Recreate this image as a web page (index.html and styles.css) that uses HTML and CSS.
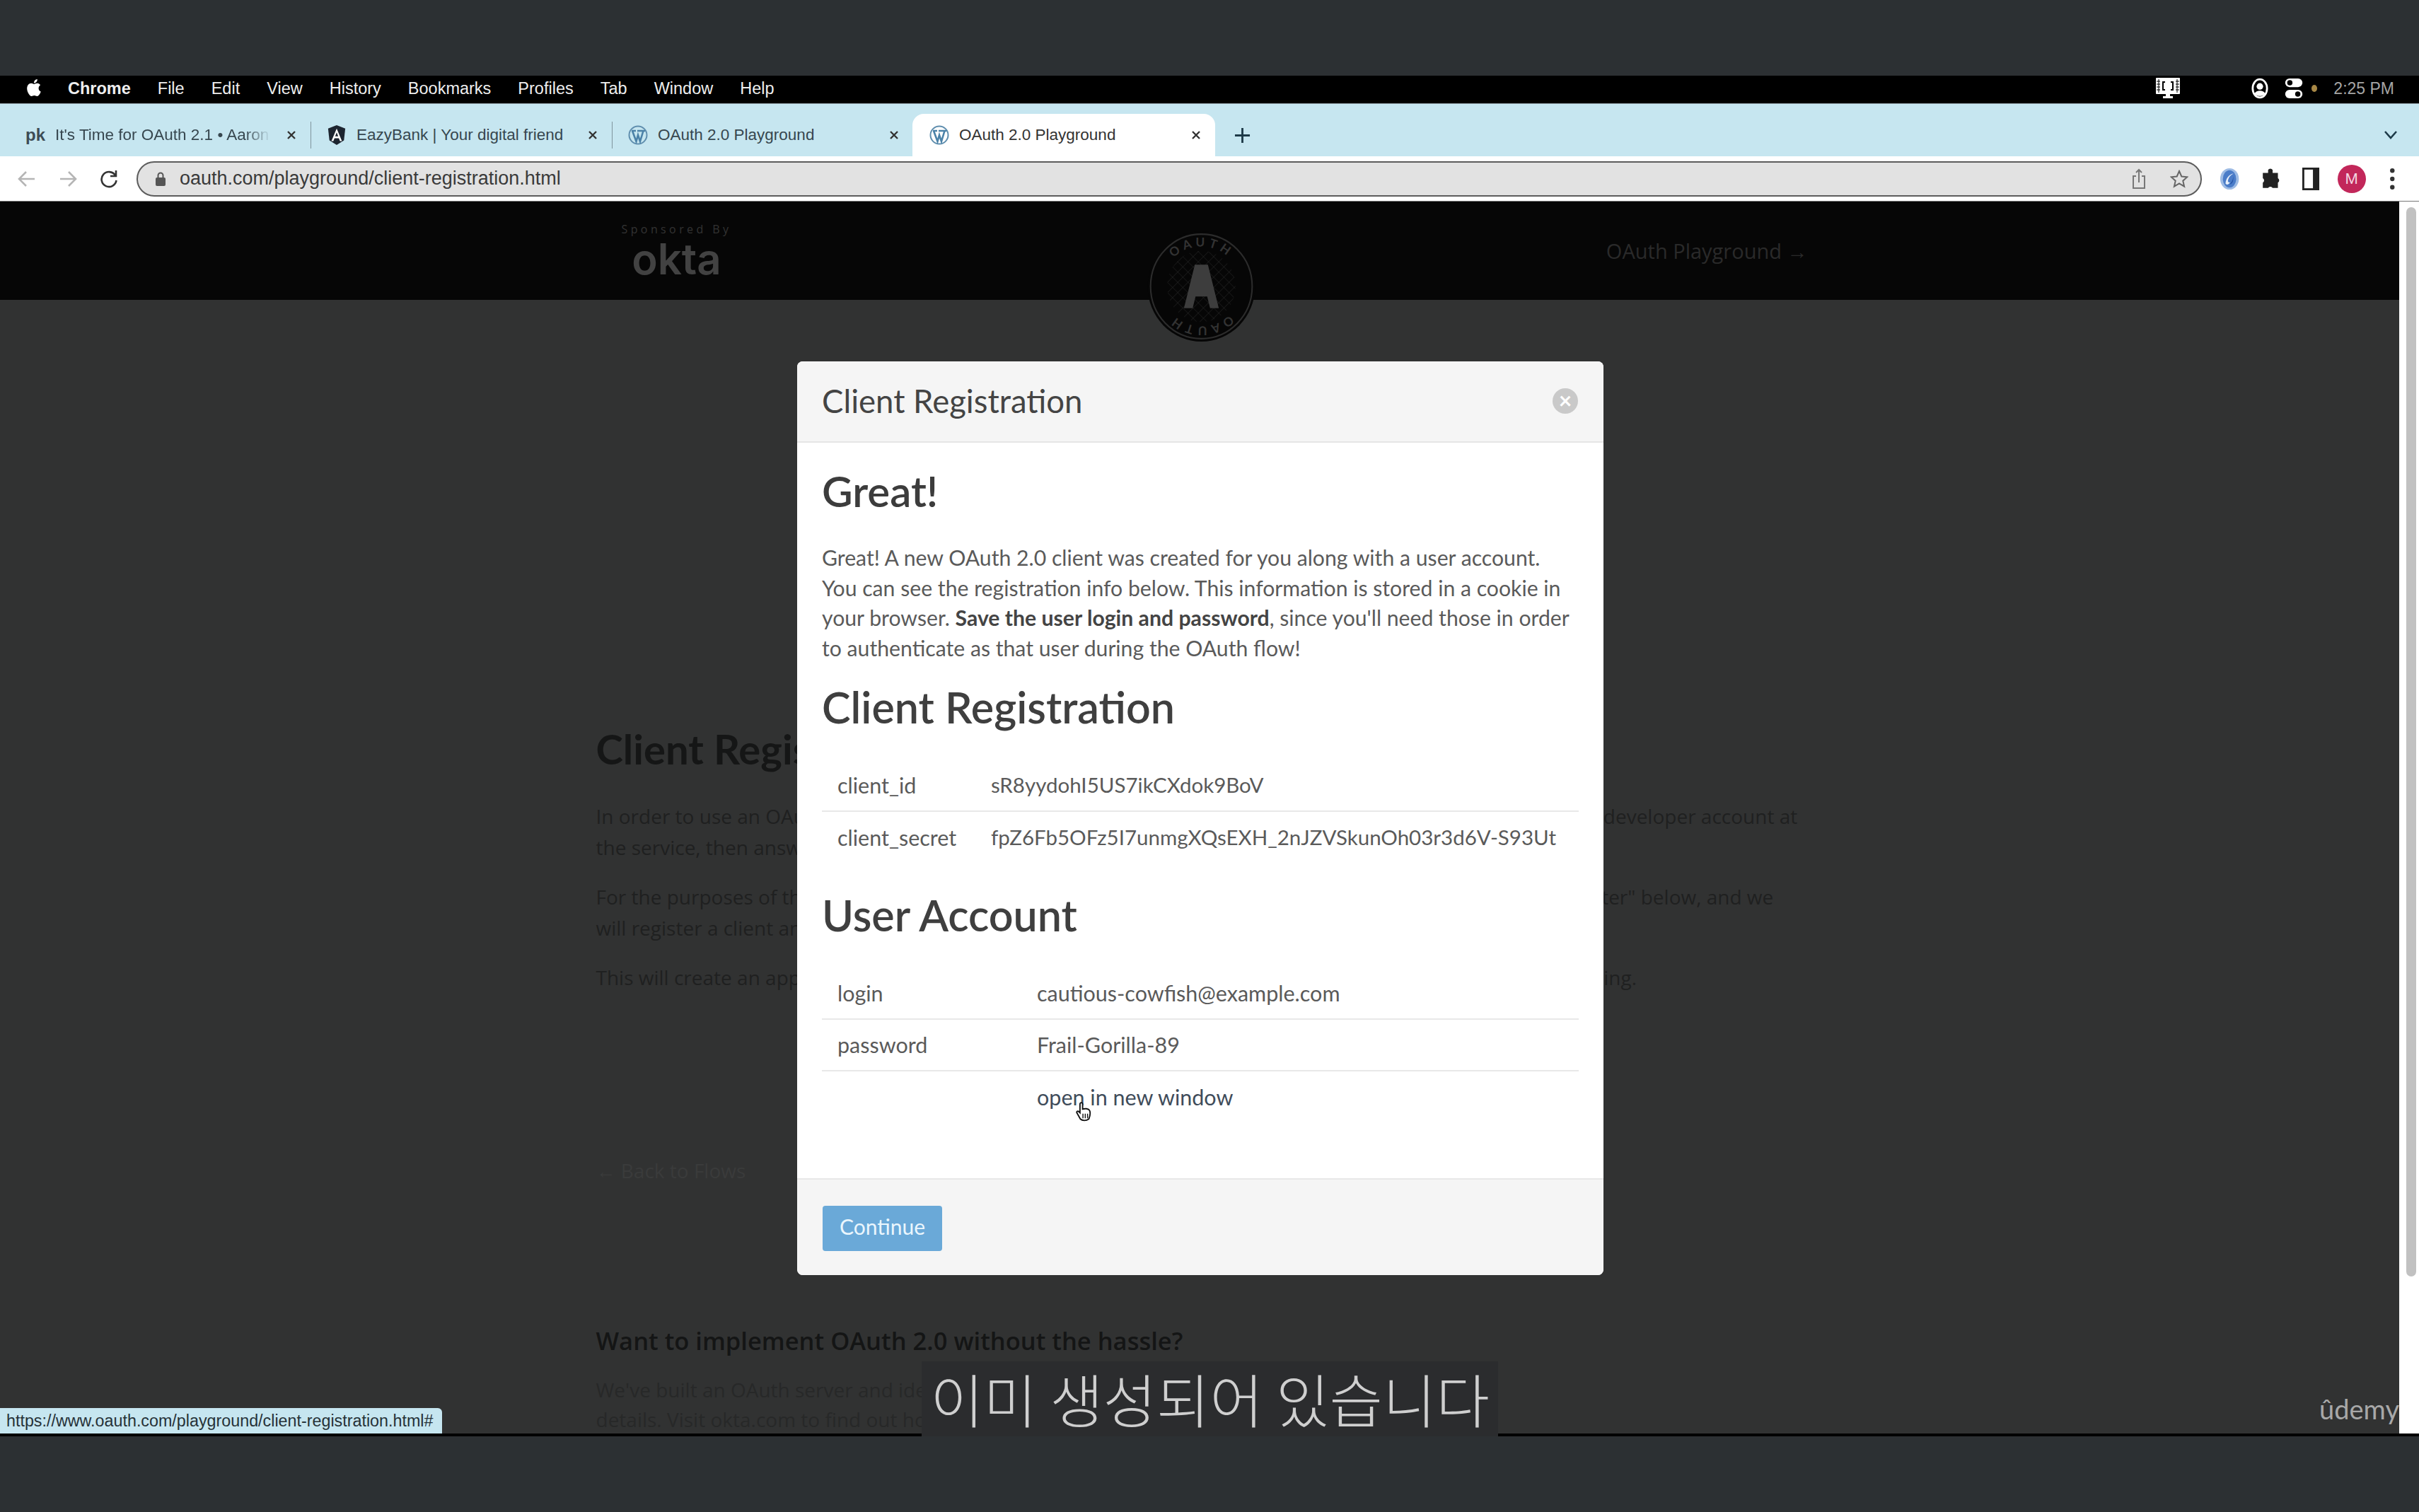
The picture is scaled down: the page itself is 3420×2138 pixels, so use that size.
FILE: index.html
```html
<!DOCTYPE html>
<html lang="en">
<head>
    <meta charset="UTF-8">
    <title>OAuth 2.0 Playground</title>
    <link rel="stylesheet" href="styles.css">
</head>
<body>
    <div class="letterbox letterbox-top"></div>

    <!-- Mac menu bar -->
    <div class="menubar">
        <svg class="apple" viewBox="0 0 24 24"><path fill="#fff" d="M12.152 6.896c-.948 0-2.415-1.078-3.96-1.04-2.04.027-3.91 1.183-4.961 3.014-2.117 3.675-.546 9.103 1.519 12.09 1.013 1.454 2.208 3.09 3.792 3.039 1.52-.065 2.09-.987 3.935-.987 1.831 0 2.35.987 3.96.948 1.637-.026 2.676-1.48 3.676-2.948 1.156-1.688 1.636-3.325 1.662-3.415-.039-.013-3.182-1.221-3.22-4.857-.026-3.04 2.48-4.494 2.597-4.559-1.429-2.09-3.623-2.324-4.39-2.376-2-.156-3.675 1.09-4.61 1.09zM15.53 3.83c.843-1.012 1.4-2.427 1.245-3.83-1.207.052-2.662.805-3.532 1.818-.78.896-1.454 2.338-1.273 3.714 1.338.104 2.715-.688 3.559-1.701"/></svg>
        <span class="menu-app">Chrome</span>
        <span>File</span>
        <span>Edit</span>
        <span>View</span>
        <span>History</span>
        <span>Bookmarks</span>
        <span>Profiles</span>
        <span>Tab</span>
        <span>Window</span>
        <span>Help</span>
        <div class="menu-status">
            <svg class="status-screen" viewBox="0 0 34 30">
                <rect width="34" height="23" rx="1" fill="#fff"/>
                <path d="M4 2v19M30 2v19M1 5h5M1 9h5M1 13h5M1 17h5M28 5h5M28 9h5M28 13h5M28 17h5" stroke="#000" stroke-width="1"/>
                <path d="M13 6h-3v11h3M21 6h3v11h-3" fill="none" stroke="#000" stroke-width="2"/>
                <path d="M14 23h6v3h4v3H10v-3h4z" fill="#fff"/>
            </svg>
            <svg class="status-user" viewBox="0 0 26 32">
                <ellipse cx="13" cy="16" rx="11" ry="14" fill="none" stroke="#fff" stroke-width="3"/>
                <circle cx="13" cy="13" r="5" fill="#fff"/>
                <path d="M5 24c2-6 14-6 16 0-4 5-12 5-16 0z" fill="#fff"/>
            </svg>
            <svg class="status-toggles" viewBox="0 0 26 32">
                <rect y="1" width="26" height="13" rx="6.5" fill="#fff"/>
                <circle cx="7" cy="7.5" r="4" fill="#000"/>
                <rect y="18" width="26" height="13" rx="6.5" fill="#fff"/>
                <circle cx="19" cy="24.5" r="4" fill="#000"/>
            </svg>
            <span class="status-dot"></span>
            <span class="status-time">2:25 PM</span>
        </div>
    </div>

    <!-- Chrome tabs -->
    <div class="tabstrip">
        <div class="tab">
            <span class="favicon-text">pk</span>
            <span class="tab-title tab-title-fade">It's Time for OAuth 2.1 • Aaron</span>
            <svg class="tab-close" viewBox="0 0 14 14"><path d="M2 2l10 10M12 2L2 12"/></svg>
        </div>
        <span class="tab-sep"></span>
        <div class="tab">
            <svg class="favicon" viewBox="0 0 26 30">
                <path fill="#1d2530" d="M13 0l13 5-2 18-11 7-11-7L0 5z"/>
                <path fill="#fff" d="M13 5l8 19h-3l-1.700-4.300H9.700L8 24H5zm0 6l-2.300 6h4.600z"/>
            </svg>
            <span class="tab-title">EazyBank | Your digital friend</span>
            <svg class="tab-close" viewBox="0 0 14 14"><path d="M2 2l10 10M12 2L2 12"/></svg>
        </div>
        <span class="tab-sep"></span>
        <div class="tab">
            <svg class="favicon" viewBox="0 0 28 28">
                <circle cx="14" cy="14" r="12.500" fill="none" stroke="#5f8eae" stroke-width="2"/>
                <path d="M6 8l5.500 15L14 14l3 9 4.500-15M5 8h6M13 8h6M19 8h5" fill="none" stroke="#4b82a8" stroke-width="2.600"/>
            </svg>
            <span class="tab-title">OAuth 2.0 Playground</span>
            <svg class="tab-close" viewBox="0 0 14 14"><path d="M2 2l10 10M12 2L2 12"/></svg>
        </div>
        <div class="tab tab-active">
            <svg class="favicon" viewBox="0 0 28 28">
                <circle cx="14" cy="14" r="12.500" fill="none" stroke="#5f8eae" stroke-width="2"/>
                <path d="M6 8l5.500 15L14 14l3 9 4.500-15M5 8h6M13 8h6M19 8h5" fill="none" stroke="#4b82a8" stroke-width="2.600"/>
            </svg>
            <span class="tab-title">OAuth 2.0 Playground</span>
            <svg class="tab-close" viewBox="0 0 14 14"><path d="M2 2l10 10M12 2L2 12"/></svg>
        </div>
        <svg class="tab-new" viewBox="0 0 24 24"><path d="M12 1v22M1 12h22"/></svg>
        <svg class="tab-list" viewBox="0 0 20 14"><path d="M2 2l8 9 8-9"/></svg>
    </div>

    <!-- Chrome toolbar -->
    <div class="toolbar">
        <div class="nav-btn">
            <svg viewBox="0 0 28 28"><path class="nav-off" d="M25 14H4M13 4L3 14l10 10"/></svg>
        </div>
        <div class="nav-btn">
            <svg viewBox="0 0 28 28"><path class="nav-off" d="M3 14h21M15 4l10 10-10 10"/></svg>
        </div>
        <div class="nav-btn">
            <svg viewBox="0 0 28 28"><path class="nav-on" d="M23 9a10.500 10.500 0 1 0 1.500 7M24 2v8h-8"/></svg>
        </div>
        <div class="urlbar">
            <svg class="lock" viewBox="0 0 14 20">
                <rect y="8" width="14" height="12" rx="2" fill="#555"/>
                <path d="M3.500 9V5a3.500 3.500 0 0 1 7 0v4" fill="none" stroke="#555" stroke-width="2"/>
            </svg>
            <span class="url-text">oauth.com/playground/client-registration.html</span>
            <svg class="url-share" viewBox="0 0 20 30">
                <path d="M6 11H2v17h16V11h-4M10 20V2M6 6l4-4 4 4" fill="none" stroke="#777" stroke-width="2"/>
            </svg>
            <svg class="url-star" viewBox="0 0 26 26">
                <path d="M13 2l3.300 7.500 8 .8-6 5.400 1.800 8L13 19.500l-7.100 4.200 1.800-8-6-5.400 8-.8z" fill="none" stroke="#666" stroke-width="2"/>
            </svg>
        </div>
        <div class="tool-btn">
            <svg viewBox="0 0 30 34">
                <ellipse cx="15" cy="17" rx="14" ry="16" fill="#9dbbe4"/>
                <ellipse cx="15" cy="17" rx="10" ry="13" fill="#4a7cc8"/>
                <path d="M21 9c-6 0-12 8-12 15 2 3 5 1 7-2-3 1-4-1-3-4 1-4 4-7 8-9z" fill="#e8f0fa"/>
                <path d="M20 12c1 5-1 10-5 13 4 0 7-6 5-13z" fill="#1f4c9e"/>
            </svg>
        </div>
        <div class="tool-btn">
            <svg viewBox="0 0 26 30">
                <path fill="#222" d="M10 3a3.500 3.500 0 0 1 6 0v4h7v7a3.500 3.500 0 0 1 0 6v7H16a3.500 3.500 0 0 0-6 0H3v-7a3.500 3.500 0 0 0 0-6V7h7z"/>
            </svg>
        </div>
        <div class="tool-btn">
            <svg viewBox="0 0 26 34">
                <rect x="1.500" y="1.500" width="23" height="31" fill="none" stroke="#222" stroke-width="3"/>
                <rect x="16" y="2" width="9" height="30" fill="#222"/>
            </svg>
        </div>
        <div class="tool-btn"><span class="avatar">M</span></div>
        <div class="tool-btn">
            <svg viewBox="0 0 8 30"><circle cx="4" cy="4" r="3" fill="#333"/><circle cx="4" cy="15" r="3" fill="#333"/><circle cx="4" cy="26" r="3" fill="#333"/></svg>
        </div>
    </div>

    <!-- Page behind the dialog -->
    <div class="page">
        <div class="page-main">
            <header class="site-header">
                <div class="site-header-inner">
                    <div class="sponsor">
                        <span class="sponsor-label">Sponsored By</span>
                        <span class="sponsor-name">okta</span>
                    </div>
                    <span class="site-link">OAuth Playground →</span>
                </div>
            </header>
            <main class="content">
                <h2 class="content-title">Client Registration</h2>
                <p>In order to use an OAuth 2.0 server, you first need to register a new application by firstly signing up for a free developer account at<br>the service, then answering a few questions about your application to receive credentials.</p>
                <p>For the purposes of this playground, we've taken care of that step for you. Just click the button marked "Register" below, and we<br>will register a client and a new user account for you to use during the flows.</p>
                <p>This will create an application and a user account that you can use to try out all of the flows while you're learning.</p>
                <a class="back-link">← Back to Flows</a>
            </main>
            <section class="promo">
                <h3>Want to implement OAuth 2.0 without the hassle?</h3>
                <p>We've built an OAuth server and identity management so you can focus on your app<br>details. Visit okta.com to find out how to get started for free.</p>
            </section>
        </div>
        <div class="scrollbar"><span class="scrollbar-thumb"></span></div>

        <svg class="oauth-badge" viewBox="0 0 150 154">
            <defs>
                <pattern id="lattice" width="10" height="10" patternUnits="userSpaceOnUse" patternTransform="rotate(45)">
                    <path d="M0 0h10M0 0v10" stroke="#262626" stroke-width="1"/>
                </pattern>
                <path id="badgeTop" d="M20 77a55 55 0 0 1 110 0"/>
                <path id="badgeBottom" d="M130 77a55 55 0 0 1-110 0"/>
            </defs>
            <ellipse cx="75" cy="77" rx="74" ry="76" fill="#060606"/>
            <ellipse cx="75" cy="77" rx="70" ry="72" fill="none" stroke="#2c2c2c" stroke-width="2"/>
            <ellipse cx="75" cy="77" rx="47" ry="49" fill="url(#lattice)"/>
            <path d="M66 47h18l15 60H87l-4-16H67l-4 16H51z" fill="#3d3d3d"/>
            <text class="badge-text"><textPath href="#badgeTop" startOffset="50%" text-anchor="middle">OAUTH</textPath></text>
            <text class="badge-text"><textPath href="#badgeBottom" startOffset="50%" text-anchor="middle">OAUTH</textPath></text>
        </svg>

        <div class="status-bubble">https://www.oauth.com/playground/client-registration.html#</div>
        <span class="watermark">ûdemy</span>

        <!-- Dialog -->
        <div class="modal">
            <div class="modal-header">
                <span class="modal-title">Client Registration</span>
                <span class="modal-close">×</span>
            </div>
            <div class="modal-body">
                <h1>Great!</h1>
                <p>Great! A new OAuth 2.0 client was created for you along with a user account.<br>You can see the registration info below. This information is stored in a cookie in<br>your browser. <strong>Save the user login and password</strong>, since you'll need those in order<br>to authenticate as that user during the OAuth flow!</p>
                <h2 class="section-client">Client Registration</h2>
                <table class="info-table client-table">
                    <tr><td>client_id</td><td class="value-cell">sR8yydohI5US7ikCXdok9BoV</td></tr>
                    <tr><td>client_secret</td><td class="value-cell">fpZ6Fb5OFz5I7unmgXQsEXH_2nJZVSkunOh03r3d6V-S93Ut</td></tr>
                </table>
                <h2 class="section-user">User Account</h2>
                <table class="info-table user-table">
                    <tr><td>login</td><td>cautious-cowfish@example.com</td></tr>
                    <tr><td>password</td><td>Frail-Gorilla-89</td></tr>
                    <tr><td></td><td class="link-cell">open in new window</td></tr>
                </table>
            </div>
            <div class="modal-footer">
                <button class="continue-btn">Continue</button>
            </div>
        </div>

        <svg class="hand-cursor" viewBox="0 0 26 30">
            <path d="M8 2c1.500-1.500 3.500-.5 3.500 1.500V11c3-1 9-1 10.500 2 1.500 3 .5 9-1 13-4 3-10 3-13 0L3 17c-1.500-2 1-4 3-2l1.500 1.500V4c0-1 .2-1.600.5-2z" fill="#fff" stroke="#111" stroke-width="2"/>
            <path d="M12 18v7M15.500 18v7M19 18v7" stroke="#111" stroke-width="1.500"/>
        </svg>
    </div>

    <div class="page-end"></div>
    <div class="letterbox letterbox-bottom"></div>

    <div class="subtitle">이미 생성되어 있습니다</div>
</body>
</html>
```
FILE: styles.css
```css
/* Reset */
* {
    margin: 0;
    padding: 0;
    box-sizing: border-box;
}

body {
    position: relative;
    width: 3420px;
    height: 2138px;
    overflow: hidden;
    display: flex;
    flex-direction: column;
    background-color: #2c3033;
    font-family: 'Liberation Sans', Arial, sans-serif;
}

/* Video letterbox */
.letterbox {
    height: 107px;
    flex: none;
    background-color: #2c3033;
}

/* Mac menu bar */
.menubar {
    height: 39px;
    flex: none;
    display: flex;
    align-items: center;
    gap: 38px;
    padding: 0 0 3px 36px;
    background-color: #000;
    color: #eee;
    font-size: 23.5px;
}

.apple {
    width: 24px;
    height: 30px;
    margin-right: -2px;
    margin-top: -2px;
}

.menu-app {
    font-weight: bold;
}

.menu-status {
    margin-left: auto;
    display: flex;
    align-items: center;
    padding-right: 35px;
}

.status-screen {
    width: 34px;
    height: 30px;
    margin-right: 101px;
}

.status-user {
    width: 24px;
    height: 30px;
    margin-right: 23px;
}

.status-toggles {
    width: 26px;
    height: 30px;
    margin-right: 12px;
}

.status-dot {
    width: 8px;
    height: 10px;
    border-radius: 50%;
    background-color: #a88846;
    margin-right: 23px;
}

.status-time {
    color: #a5a5a5;
    font-size: 23px;
}

/* Tabs */
.tabstrip {
    height: 75px;
    flex: none;
    display: flex;
    align-items: flex-end;
    padding-left: 14px;
    background-color: #c6e6f0;
    border-top: 1px solid #8b9aa0;
    position: relative;
}

.tab {
    width: 425px;
    height: 60px;
    flex: none;
    display: flex;
    align-items: center;
    padding: 0 20px 0 22px;
    color: #37474f;
    font-size: 22.5px;
}

.tab-sep {
    width: 1px;
    height: 38px;
    flex: none;
    margin-bottom: 11px;
    background-color: #7f949c;
}

.tab-active {
    width: 428px;
    height: 67px;
    margin-bottom: -7px;
    padding-bottom: 7px;
    padding-left: 24px;
    margin-left: -1px;
    background-color: #fff;
    border-radius: 16px 16px 0 0;
    color: #333;
}

.favicon {
    width: 28px;
    height: 28px;
    flex: none;
}

.favicon-text {
    width: 28px;
    flex: none;
    font-weight: bold;
    font-size: 24px;
    color: #3d4c55;
}

.tab-title {
    flex: 1;
    min-width: 0;
    margin: 0 22px 0 14px;
    white-space: nowrap;
}

.tab-title-fade {
    -webkit-mask-image: linear-gradient(to right, #000 88%, transparent 100%);
    mask-image: linear-gradient(to right, #000 88%, transparent 100%);
}

.tab-close {
    width: 14px;
    height: 14px;
    flex: none;
    fill: none;
    stroke: #333;
    stroke-width: 2.4;
}

.tab-new {
    width: 23px;
    height: 23px;
    margin: 0 0 18px 27px;
    fill: none;
    stroke: #1d3a48;
    stroke-width: 3;
}

.tab-list {
    width: 20px;
    height: 14px;
    margin: 0 30px 23px auto;
    fill: none;
    stroke: #1d3a48;
    stroke-width: 2.6;
}

/* Toolbar */
.toolbar {
    height: 64px;
    flex: none;
    display: flex;
    align-items: center;
    padding: 0 9px;
    background-color: #fff;
    border-bottom: 1px solid #777;
}

.nav-btn {
    width: 58px;
    display: flex;
    justify-content: center;
}

.nav-btn svg {
    width: 28px;
    height: 28px;
    fill: none;
    stroke-width: 2.6;
}

.nav-off {
    stroke: #b5b5b5;
}

.nav-on {
    stroke: #333;
}

.urlbar {
    flex: 1;
    height: 50px;
    margin: 0 11px 0 10px;
    display: flex;
    align-items: center;
    padding: 0 17px 0 25px;
    background-color: #e2e2e2;
    border: 2px solid #5c5c5c;
    border-radius: 25px;
    font-size: 27px;
    color: #3a3a3a;
}

.lock {
    width: 14px;
    height: 20px;
    margin-right: 20px;
}

.url-text {
    flex: 1;
}

.url-share {
    width: 20px;
    height: 30px;
    margin-right: 34px;
}

.url-star {
    width: 26px;
    height: 26px;
}

.tool-btn {
    width: 57.5px;
    display: flex;
    justify-content: center;
    align-items: center;
}

.tool-btn svg {
    height: 32px;
}

.avatar {
    width: 40px;
    height: 40px;
    border-radius: 50%;
    display: flex;
    align-items: center;
    justify-content: center;
    background-color: #c2275a;
    color: #f4d8e2;
    font-size: 22px;
}

/* Page behind the dialog */
.page {
    position: relative;
    flex: 1;
    display: flex;
    background-color: #313232;
    overflow: hidden;
}

.page-main {
    flex: 1;
    min-width: 0;
    font-family: 'Open Sans', sans-serif;
    color: #1f2020;
}

.site-header {
    height: 139px;
    background-color: #060606;
}

.site-header-inner {
    width: 1707px;
    margin: 0 auto;
    display: flex;
    justify-content: space-between;
}

.sponsor {
    display: flex;
    flex-direction: column;
    align-items: center;
    padding: 28px 0 0 36px;
}

.sponsor-label {
    font-size: 16px;
    letter-spacing: 4.4px;
    color: #333;
}

.sponsor-name {
    margin-top: 6px;
    font-family: Inter, sans-serif;
    font-weight: 600;
    font-size: 60px;
    line-height: 50px;
    color: #424242;
}

.site-link {
    padding-top: 50px;
    margin-right: -6px;
    font-size: 29px;
    color: #2a2a2a;
}

.content {
    width: 1707px;
    height: 1450px;
    margin: 0 auto;
    padding-top: 600px;
    font-size: 28px;
}

.content p {
    line-height: 44px;
    margin-bottom: 26px;
    white-space: nowrap;
}

.content-title {
    font-family: Lato, sans-serif;
    font-size: 58px;
    line-height: 70px;
    font-weight: 700;
    color: #151616;
    margin-bottom: 38px;
}

.back-link {
    display: block;
    margin-top: 232px;
    color: #3a3b3b;
}

.promo {
    width: 1707px;
    margin: 0 auto;
    color: #141515;
}

.promo h3 {
    font-size: 34.5px;
    font-weight: 600;
    line-height: 44px;
}

.promo p {
    margin-top: 26px;
    font-size: 28px;
    line-height: 42px;
    color: #272828;
    white-space: nowrap;
}

.scrollbar {
    width: 28px;
    flex: none;
    padding: 8px 4px 0 10px;
    background-color: #fff;
}

.scrollbar-thumb {
    display: block;
    height: 1512px;
    border-radius: 7px;
    background-color: #c1c1c1;
}

.oauth-badge {
    position: absolute;
    left: 1621px;
    top: 41px;
    width: 155px;
    height: 158px;
}

.badge-text {
    font-family: Lato, sans-serif;
    font-weight: 700;
    font-size: 17px;
    letter-spacing: 5px;
    fill: #333;
}

.status-bubble {
    position: absolute;
    left: 0;
    bottom: 0;
    width: 625px;
    height: 36px;
    padding-left: 9px;
    background-color: #c6e6f0;
    border-radius: 0 6px 0 0;
    font-size: 23.3px;
    line-height: 36px;
    color: #263238;
    white-space: nowrap;
}

.watermark {
    position: absolute;
    right: 28px;
    bottom: 12px;
    font-family: Lato, sans-serif;
    font-size: 38px;
    color: #a8a8a8;
}

/* Dialog */
.modal {
    position: absolute;
    left: 1127px;
    top: 226px;
    width: 1140px;
    height: 1292px;
    display: flex;
    flex-direction: column;
    background-color: #fff;
    border-radius: 8px;
    font-family: Lato, sans-serif;
    color: #5a5a5a;
    overflow: hidden;
}

.modal-header {
    height: 115px;
    flex: none;
    display: flex;
    align-items: center;
    justify-content: space-between;
    padding: 0 36px 2px 35px;
    background-color: #f5f5f5;
    border-bottom: 2px solid #e5e5e5;
}

.modal-title {
    font-size: 45.5px;
    color: #444;
}

.modal-close {
    width: 36px;
    height: 36px;
    border-radius: 50%;
    background-color: #c9c9c9;
    color: #fff;
    font-size: 32px;
    font-weight: 700;
    line-height: 34px;
    text-align: center;
}

.modal-body {
    flex: 1;
    padding: 35px 35px 0;
}

.modal-body h1 {
    font-size: 60px;
    line-height: 66px;
    font-weight: 600;
    color: #3c3c3c;
}

.modal-body p {
    margin-top: 40px;
    font-size: 30.2px;
    line-height: 42.7px;
    white-space: nowrap;
}

.modal-body strong {
    color: #444;
}

.modal-body h2 {
    font-size: 61px;
    line-height: 66px;
    font-weight: 600;
    color: #3f3f3f;
}

.section-client {
    margin-top: 29px;
}

.section-user {
    margin-top: 41px;
}

.info-table {
    width: 100%;
    border-collapse: collapse;
    font-size: 30.5px;
}

.info-table tr + tr {
    border-top: 2px solid #e8e8e8;
}

.info-table td {
    height: 73px;
    white-space: nowrap;
}

.info-table td:first-child {
    padding-left: 22px;
}

.client-table {
    margin-top: 41px;
}

.client-table td:first-child {
    width: 239px;
}

.value-cell {
    font-size: 29.5px;
}

.user-table {
    margin-top: 41px;
}

.user-table td:first-child {
    width: 304px;
}

.link-cell {
    color: #3f4c5a;
}

.modal-footer {
    height: 137px;
    flex: none;
    padding-top: 37px;
    padding-left: 36px;
    background-color: #f5f5f5;
    border-top: 2px solid #e8e8e8;
}

.continue-btn {
    width: 169px;
    height: 64px;
    padding-bottom: 6px;
    border: none;
    border-radius: 4px;
    background-color: #6aa9d8;
    color: #eaf6fd;
    font-family: Lato, sans-serif;
    font-size: 30px;
}

.hand-cursor {
    position: absolute;
    left: 1519px;
    top: 1273px;
    width: 26px;
    height: 28px;
}

/* Bottom of the recording */
.page-end {
    height: 4px;
    flex: none;
    background-color: #000;
}

/* Caption over the video */
.subtitle {
    position: absolute;
    left: 1303px;
    top: 1925px;
    width: 815px;
    height: 106px;
    padding-top: 2px;
    background-color: #2b2c2e;
    color: #cfcfcf;
    font-family: 'Noto Sans CJK KR', sans-serif;
    font-size: 82px;
    font-weight: 300;
    line-height: 100px;
    text-align: center;
    white-space: nowrap;
}
```
